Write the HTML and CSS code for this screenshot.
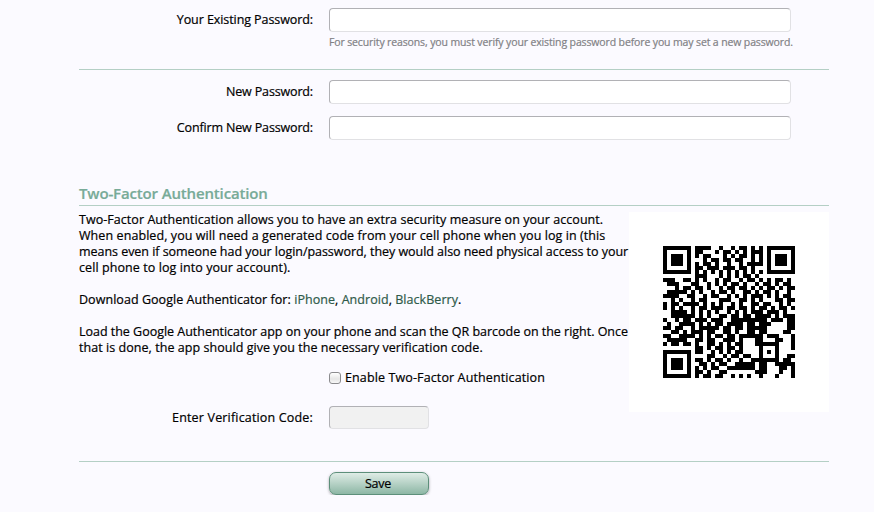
FILE: index.html
```html
<!DOCTYPE html>
<html lang="en">
<head>
  <meta charset="UTF-8">
  <title>Password and Security</title>
  <link rel="stylesheet" href="styles.css">
</head>
<body>
  <form class="account-form">
    <div class="row">
      <label for="old-password">Your Existing Password:</label>
      <div>
        <input type="password" class="text-input" id="old-password">
        <p class="hint">For security reasons, you must verify your existing password before you may set a new password.</p>
      </div>
    </div>

    <div class="new-password">
      <div class="row">
        <label for="password">New Password:</label>
        <input type="password" class="text-input" id="password">
      </div>
      <div class="row">
        <label for="confirm">Confirm New Password:</label>
        <input type="password" class="text-input" id="confirm">
      </div>
    </div>

    <h3>Two-Factor Authentication</h3>
    <div class="two-factor">
      <div class="two-factor-main">
        <p class="intro">Two-Factor Authentication allows you to have an extra security measure on your account.<br>
        <span class="wide">When enabled, you will need a generated code from your cell phone when you log in (this</span><br>
        <span class="tight">means even if someone had your login/password, they would also need physical access to your</span><br>
        <span class="wide">cell phone to log into your account).</span></p>
        <p class="download">Download Google Authenticator for: <a href="#">iPhone</a>, <a href="#">Android</a>, <a href="#">BlackBerry</a>.</p>
        <p class="scan"><span class="tight">Load the Google Authenticator app on your phone and scan the QR barcode on the right. Once</span><br>
        that is done, the app should give you the necessary verification code.</p>
        <div class="enable">
          <input type="checkbox" id="enable">
          <label for="enable">Enable Two-Factor Authentication</label>
        </div>
        <div class="row">
          <label for="code" class="code-label">Enter Verification Code:</label>
          <input type="text" class="text-input code" id="code" disabled>
        </div>
      </div>
      <div class="barcode">
        <svg id="qr" width="132" height="132" viewBox="0 0 33 33" shape-rendering="crispEdges"></svg>
      </div>
    </div>

    <div class="submit">
      <button type="button">Save</button>
    </div>
  </form>
  <script src="qr.js"></script>
</body>
</html>
```
FILE: styles.css
```css
* {
  box-sizing: border-box;
}
body {
  margin: 0;
  background-color: #fbfaff;
  color: #000;
  font-family: "Trebuchet MS", "Open Sans", "Noto Sans", sans-serif;
  font-size: 12.5px;
  font-weight: 500;
  line-height: 16px;
  -webkit-text-stroke: 0.2px;
}
p {
  margin: 0;
  white-space: nowrap;
}
.account-form {
  width: 750px;
  margin-left: 79px;
  padding-top: 8px;
}
.row {
  display: grid;
  grid-template-columns: 234px 462px;
  column-gap: 16px;
}
.row label {
  letter-spacing: -0.08px;
  text-align: right;
  line-height: 23px;
  white-space: nowrap;
}
.new-password label {
  letter-spacing: -0.15px;
}
.row .code-label {
  letter-spacing: 0.17px;
}
.text-input {
  display: block;
  width: 462px;
  height: 24px;
  padding: 2px 4px;
  background-color: #fff;
  border: 1px solid;
  border-color: #b1b1b5 #e1e1e4 #e1e1e4 #b1b1b5;
  border-radius: 4px;
}
.hint {
  margin-top: 2px;
  color: #818185;
  font-size: 10.5px;
  letter-spacing: -0.13px;
}
.new-password {
  display: flex;
  flex-direction: column;
  gap: 12px;
  margin-top: 19px;
  padding-top: 10px;
  border-top: 1px solid #b4cfc5;
}
h3 {
  margin: 43px 0 0;
  padding-bottom: 2px;
  border-bottom: 1px solid #b4cfc5;
  color: #78ab98;
  font-size: 15px;
  font-weight: 600;
  letter-spacing: -0.15px;
  line-height: 20px;
}
.two-factor {
  display: flex;
  height: 255px;
  padding-top: 6px;
}
.two-factor-main {
  width: 550px;
}
.intro,
.download,
.scan {
  letter-spacing: 0.05px;
}
.wide {
  letter-spacing: 0.08px;
}
.tight {
  letter-spacing: -0.02px;
}
.download,
.scan {
  margin-top: 16px;
}
a {
  color: #2f5a4a;
  text-decoration: none;
}
.enable {
  display: flex;
  align-items: center;
  gap: 4px;
  height: 16px;
  margin: 14px 0 20px 250px;
  letter-spacing: 0.12px;
  white-space: nowrap;
}
.enable input {
  appearance: none;
  width: 12px;
  height: 12px;
  margin: 0;
  border: 1px solid #8b8b8e;
  border-radius: 3px;
  background: linear-gradient(#fff, #e6e6e6 60%, #f8f8f8);
}
.text-input.code {
  width: 100px;
  height: 23px;
  background-color: #f1f1f1;
}
.barcode {
  display: flex;
  align-items: center;
  justify-content: center;
  width: 200px;
  height: 200px;
  background-color: #fff;
}
.submit {
  padding: 10px 0 0 250px;
  border-top: 1px solid #b4cfc5;
}
button {
  display: block;
  width: 100px;
  height: 23px;
  padding: 0 2px 0 0;
  border: 1px solid #5d8f7a;
  border-radius: 7px;
  background: linear-gradient(#dfece6, #8db7a5);
  box-shadow: 0 1px 3px rgba(0, 0, 0, 0.35);
  color: #000;
  font: inherit;
  letter-spacing: -0.3px;
}
.intro .tight {
  letter-spacing: -0.04px;
}
```
FILE: qr.js
```js
// one string per row of modules, # is a dark module
const rows = [
  '#######.####..#..#.##.#.#.#######',
  '#.....#.##...#.##.#.#.###.#.....#',
  '#.###.#.#.##...#.#.##.#.#.#.###.#',
  '#.###.#...#.##.##.##..#.#.#.###.#',
  '#.###.#.#.##.#..#..#.####.#.###.#',
  '#.....#.##.###.###.##.#...#.....#',
  '#######.#.#.#.#.#.#.#.#.#.#######',
  '........###...#.#.#.##.#.........',
  '###..##.#.#..#.##..#.##.#.#.##.#.',
  '.###...##..#.#.#.##.#..#.##.#.##.',
  '...#.##.##.#..#.##.##.#.#.##.#.##',
  '.#####.#.#..#.##.#..##.#.##.#..#.',
  '####..##..#.##..#.#.#.###.#.#.##.',
  '..#.#..#.##...###..##.#.#...##.##',
  '#.##.####.#.#.#..#.#..##.##..#.#.',
  '#.#.#..#.##.###.##.##.#.##.#.##.#',
  '..####.#.#.#.#..#.#.#.###.###.#..',
  '..######.#.#..##.##.##.####.#.###',
  '#..#.##.###.###..#########.###.##',
  '.#..####.#.#.##.####.##.###....##',
  '##.##..#.#####.##.##.#####.....##',
  '..##.#.###.##..##.#..##.##....##.',
  '##..####.#.#.##.##.######.###...#',
  '.#####..##.##..###.#...##...##..#',
  '#.##.##.#..##.#.#.##...######...#',
  '........##.#.##.##.#....#...#...#',
  '#######.##..#.#.#.##....#.#.#....',
  '#.....#....##..#.##.##..#...#..##',
  '#.###.#.##.#.##.#..#..#######.##.',
  '#.###.#..##.#.##..#####.##..#####',
  '#.###.#.#.#.##..#######.##...##.#',
  '#.....#.##.#..##.......###...#..#',
  '#######.#.##.##..#.#.#..#...#...#'
];

let d = '';
rows.forEach(function(row, y) {
  for (let x = 0; x < row.length; x++) {
    if (row[x] === '#') d += `M${x} ${y}h1v1h-1z`;
  }
});

const path = document.createElementNS('http://www.w3.org/2000/svg', 'path');
path.setAttribute('d', d);
document.getElementById('qr').appendChild(path);
```
